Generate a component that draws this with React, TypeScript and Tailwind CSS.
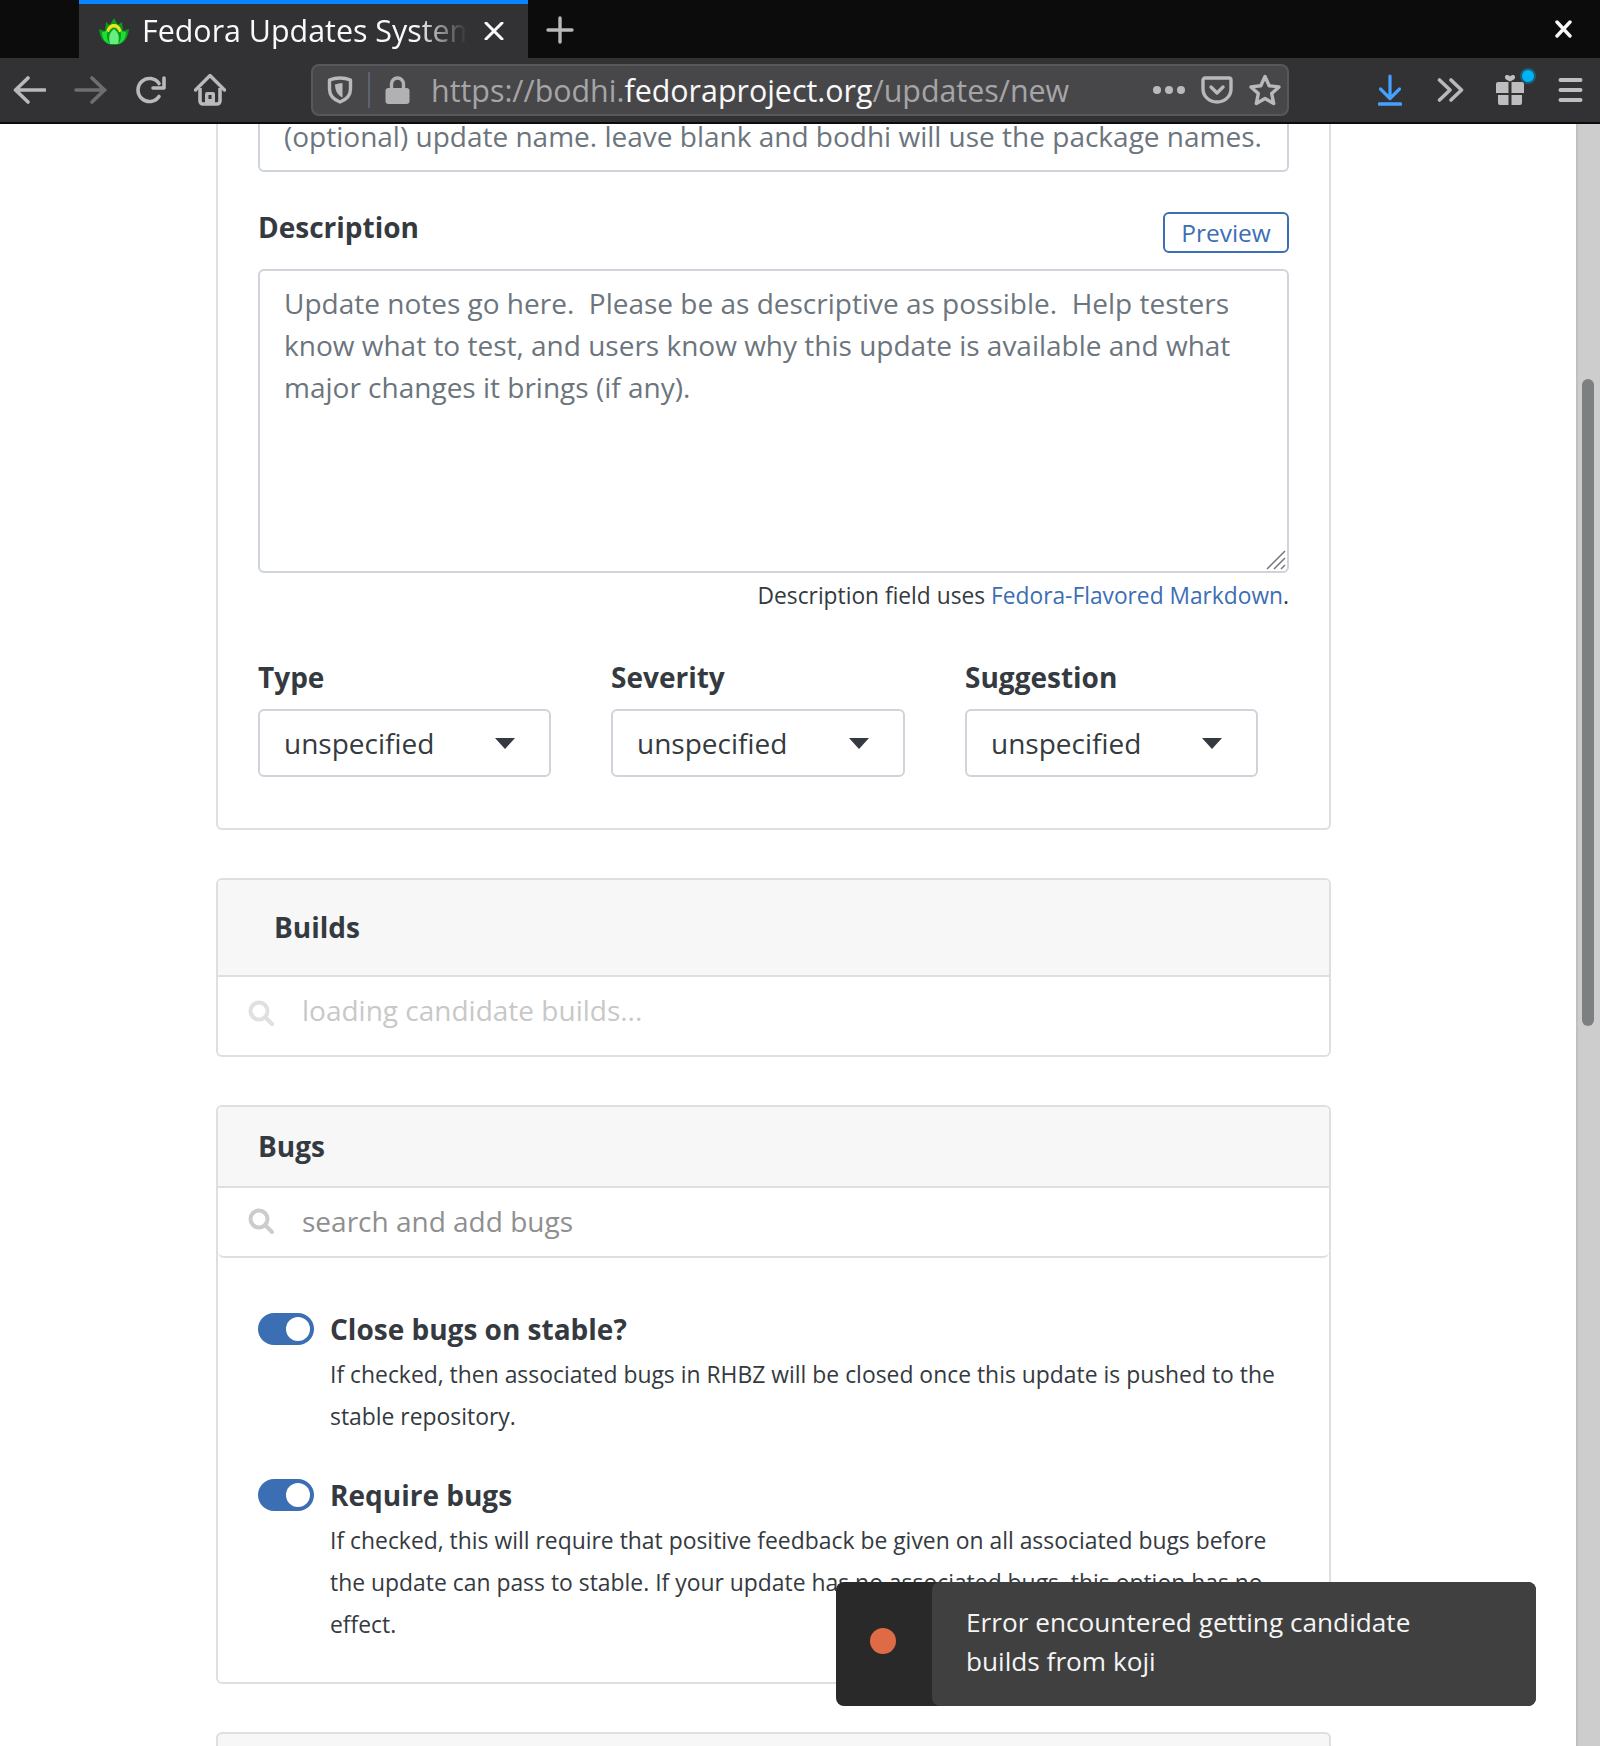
const ICON = "#b9b9bb";

function Favicon() {
  return (
    <svg width="32" height="28" viewBox="0 0 32 28">
      <path d="M16 28C7 28 2 22 1 12l6 2 1-9 4 3 4-7 4 7 4-3 1 9 6-2c-1 10-6 16-15 16z" fill="#0b9a1c" />
      <path d="M8 15c2-7 5-8 8-8s6 1 8 8h-3c-1-3-3-4.500-5-4.500S12 12 11 15z" fill="#efe31f" />
      <path d="M10 14c-2 4-1 10 2 13-5-1-8-6-8-12zM22 14c2 4 1 10-2 13 5-1 8-6 8-12z" fill="#1fdc37" />
      <path d="M16 12c4 3 6 7 4 15h-8c-2-8 0-12 4-15z" fill="#63f080" />
    </svg>
  );
}

function Back() {
  return (
    <svg width="33" height="28" viewBox="0 0 33 28" fill="none" stroke={ICON} strokeWidth="3.600" strokeLinecap="round" strokeLinejoin="round">
      <path d="M3 14h29M15 2 2.500 14 15 26" />
    </svg>
  );
}

function Forward() {
  return (
    <svg width="33" height="28" viewBox="0 0 33 28" fill="none" stroke="#6e6e70" strokeWidth="3.600" strokeLinecap="round" strokeLinejoin="round">
      <path d="M31 14H2M18 2l12.500 12L18 26" />
    </svg>
  );
}

function Reload() {
  return (
    <svg width="30" height="28" viewBox="0 0 30 28" fill="none" stroke={ICON} strokeWidth="3.600" strokeLinecap="round" strokeLinejoin="round">
      <path d="M23 7.500A11.500 11.500 0 1 0 23 20.500" />
      <path d="M28 2v10H17" />
    </svg>
  );
}

function Home() {
  return (
    <svg width="32" height="32" viewBox="0 0 32 32" fill="none">
      <path d="M1.500 16 16 1.500 30.500 16" stroke={ICON} strokeWidth="3.400" strokeLinecap="round" strokeLinejoin="round" />
      <path d="M6 14v13a3 3 0 0 0 3 3h14a3 3 0 0 0 3-3V14" stroke={ICON} strokeWidth="3.600" />
      <path d="M11 30V20a2 2 0 0 1 2-2h6a2 2 0 0 1 2 2v10z" fill={ICON} />
      <rect x="14.500" y="21" width="3" height="4" fill="#323234" />
    </svg>
  );
}

function Shield() {
  return (
    <svg width="26" height="28" viewBox="0 0 26 28" fill="none">
      <path d="M13 2c4 0 7 .6 10.500 2v9c0 6.500-4 10.500-10.500 13C6.500 23.500 2.500 19.500 2.500 13V4C6 2.600 9 2 13 2z" stroke={ICON} strokeWidth="3.400" strokeLinejoin="round" />
      <path d="M15.500 7v14.500C11 19.500 8 15 8 8.500c2.500-1 5-1.500 7.500-1.500z" fill={ICON} />
    </svg>
  );
}

function Lock() {
  return (
    <svg width="25" height="28" viewBox="0 0 25 28" fill="none">
      <path d="M6.500 13V8a6 6 0 0 1 12 0v5" stroke="#b1b1b3" strokeWidth="3.400" />
      <rect x="0.500" y="12" width="24" height="16" rx="3" fill="#b1b1b3" />
    </svg>
  );
}

function Pocket() {
  return (
    <svg width="32" height="28" viewBox="0 0 32 28" fill="none" stroke={ICON} strokeWidth="3.400" strokeLinecap="round" strokeLinejoin="round">
      <path d="M4 2h24a2 2 0 0 1 2 2v9c0 7-6 13-14 13S2 20 2 13V4a2 2 0 0 1 2-2z" />
      <path d="m10 11 6 6 6-6" />
    </svg>
  );
}

function Star() {
  return (
    <svg width="32" height="32" viewBox="0 0 32 32" fill="none" stroke={ICON} strokeWidth="3.400" strokeLinejoin="round">
      <path d="m16 2.500 4.200 9.300 9.800 1.100-7.300 6.700 2 9.900-8.700-5-8.700 5 2-9.900L2 12.900l9.800-1.100z" />
    </svg>
  );
}

function Download() {
  return (
    <svg width="24" height="32" viewBox="0 0 24 32" fill="none" stroke="#45a1ff" strokeWidth="3.200" strokeLinecap="round" strokeLinejoin="round">
      <path d="M12 2v22M2.500 15 12 24.500 21.500 15" />
      <path d="M1.500 30h21" strokeWidth="3.600" />
    </svg>
  );
}

function Chevrons() {
  return (
    <svg width="27" height="24" viewBox="0 0 27 24" fill="none" stroke={ICON} strokeWidth="3.600" strokeLinecap="round" strokeLinejoin="round">
      <path d="m2.500 2 10.500 10L2.500 22M14 2l10.500 10L14 22" />
    </svg>
  );
}

function Gift() {
  return (
    <svg width="30" height="32" viewBox="0 0 30 32" fill="#bebebf">
      <path d="M15 7.500c-4-1.500-5.500-3-5-5s3.500-2 5 0c1.500-2 4.500-2 5 0s-1 3.500-5 5z" />
      <path d="M3 8h10.500v11H1V10a2 2 0 0 1 2-2zM16.500 8H27a2 2 0 0 1 2 2v9H16.500z" />
      <path d="M3 21h10.500v10H5a2 2 0 0 1-2-2zM16.500 21H27v8a2 2 0 0 1-2 2h-8.500z" />
    </svg>
  );
}

function Hamburger() {
  return (
    <svg width="25" height="24" viewBox="0 0 25 24" fill="none" stroke="#bebebf" strokeWidth="4" strokeLinecap="round">
      <path d="M2.500 2h20M2.500 12h20M2.500 22h20" />
    </svg>
  );
}

function SearchIcon({ color }: { color: string }) {
  return (
    <svg width="26" height="26" viewBox="0 0 26 26" fill="none" stroke={color} strokeWidth="4" strokeLinecap="round">
      <circle cx="11" cy="11" r="8.500" />
      <path d="m17.500 17.500 6.500 6.500" />
    </svg>
  );
}

function BrowserChrome() {
  return (
    <div className="shrink-0">
      <div className="flex h-[58px] items-start bg-[#0c0c0d]">
        <div className="ml-[79px] flex h-[58px] w-[449px] items-center border-t-4 border-[#0a84ff] bg-[#323234] pl-[19px]">
          <Favicon />
          <span className="ml-[12px] w-[335px] overflow-hidden whitespace-nowrap text-[30.400px] leading-[38px] text-[#f9f9fa] [mask-image:linear-gradient(to_right,black_82%,transparent_97%)]">
            Fedora Updates System
          </span>
          <svg width="20" height="18" viewBox="0 0 20 18" className="ml-[7px]" fill="none" stroke="#f9f9fa" strokeWidth="3" strokeLinecap="round">
            <path d="m2 1 16 16M18 1 2 17" />
          </svg>
        </div>
        <svg width="28" height="28" viewBox="0 0 28 28" className="ml-[18px] mt-[16px]" fill="none" stroke={ICON} strokeWidth="3.400" strokeLinecap="round">
          <path d="M14 2v24M2 14h24" />
        </svg>
        <svg width="17" height="18" viewBox="0 0 17 18" className="ml-[981px] mt-[20px]" fill="none" stroke="#f9f9fa" strokeWidth="3.400" strokeLinecap="round">
          <path d="m2 2 13 14M15 2 2 16" />
        </svg>
      </div>
      <div className="flex h-[64px] items-center bg-[#323234]">
        <div className="ml-[13px] flex"><Back /></div>
        <div className="ml-[28px] flex"><Forward /></div>
        <div className="ml-[29px] flex"><Reload /></div>
        <div className="ml-[28px] flex"><Home /></div>
        <div className="ml-[85px] flex h-[52px] w-[978px] items-center rounded-[8px] border-2 border-[#58585a] bg-[#474749]">
          <div className="ml-[14px] flex"><Shield /></div>
          <div className="ml-[15px] h-[36px] w-[2px] bg-[#5b6272]" />
          <div className="ml-[15px] flex"><Lock /></div>
          <div className="ml-[21px] w-[722px] whitespace-nowrap pt-[2px] text-[30.400px] leading-[38px] text-[#a5a5a7]">
            https://bodhi.<span className="text-[#f9f9fa]">fedoraproject.org</span>/updates/new
          </div>
          <div className="flex gap-[4px]">
            <span className="h-[8px] w-[8px] rounded-full bg-[#b9b9bb]" />
            <span className="h-[8px] w-[8px] rounded-full bg-[#b9b9bb]" />
            <span className="h-[8px] w-[8px] rounded-full bg-[#b9b9bb]" />
          </div>
          <div className="ml-[16px] flex"><Pocket /></div>
          <div className="ml-[16px] flex"><Star /></div>
        </div>
        <div className="ml-[89px] flex"><Download /></div>
        <div className="ml-[35px] flex"><Chevrons /></div>
        <div className="relative ml-[31px] flex">
          <Gift />
          <span className="absolute right-[-11px] top-[-6px] h-[16px] w-[16px] rounded-full border-2 border-[#1c5d74] bg-[#00b3f4]" />
        </div>
        <div className="ml-[33px] flex"><Hamburger /></div>
      </div>
      <div className="h-[2px] bg-[#0c0c0d]" />
    </div>
  );
}

function SelectBox({ label, width }: { label: string; width: string }) {
  return (
    <div className={width}>
      <div className="text-[28px] font-bold leading-[40px] text-[#343a40]">{label}</div>
      <div className="mt-[12px] flex h-[68px] items-center justify-between rounded-[6px] border-2 border-[#ced4da] pl-[24px] pr-[34px]">
        <span className="text-[28px] leading-[42px] text-[#343a40]">unspecified</span>
        <span className="h-0 w-0 border-x-[10px] border-t-[11px] border-x-transparent border-t-[#343a40]" />
      </div>
    </div>
  );
}

function Toggle() {
  return (
    <span className="flex h-[32px] w-[56px] shrink-0 items-center justify-end rounded-full bg-[#3c6eb4] pr-[4px]">
      <span className="h-[24px] w-[24px] rounded-full bg-white" />
    </span>
  );
}

function ToggleRow({ title, lines }: { title: string; lines: string[] }) {
  return (
    <div className="flex gap-[16px]">
      <div className="pt-[2px]"><Toggle /></div>
      <div>
        <div className="text-[28px] font-bold leading-[36px] text-[#343a40]">{title}</div>
        <div className="mt-[7px] text-[22.900px] leading-[42px] text-[#343a40]">
          {lines.map((line) => (
            <div key={line} className="whitespace-nowrap">{line}</div>
          ))}
        </div>
      </div>
    </div>
  );
}

export default function App() {
  return (
    <div className="flex h-[1746px] w-[1600px] flex-col overflow-hidden bg-white font-['Open_Sans',sans-serif]">
      <BrowserChrome />
      <div className="relative flex min-h-0 flex-1">
        <main className="min-w-0 flex-1 pl-[216px]">
          <div className="h-[706px] w-[1115px] rounded-b-[6px] border-x-2 border-b-2 border-[#dfdfdf] px-[40px]">
            <div className="h-[48px] w-[1031px] rounded-b-[6px] border-x-2 border-b-2 border-[#ced4da] pl-[24px] text-[28px] leading-[24px] whitespace-nowrap text-[#6c757d]">
              (optional) update name. leave blank and bodhi will use the package names.
            </div>
            <div className="mt-[40px] flex w-[1031px] items-start justify-between">
              <span className="text-[28px] font-bold leading-[30px] text-[#343a40]">Description</span>
              <span className="flex h-[41px] w-[126px] items-center justify-center rounded-[6px] border-2 border-[#3c6eb4] pt-[1px] text-[24.500px] text-[#3c6eb4]">Preview</span>
            </div>
            <div className="relative mt-[16px] h-[304px] w-[1031px] rounded-[6px] border-2 border-[#ced4da] pl-[24px] pt-[11px] text-[28px] leading-[42px] text-[#6c757d]">
              <div className="whitespace-nowrap">Update notes go here.&nbsp; Please be as descriptive as possible.&nbsp; Help testers</div>
              <div className="whitespace-nowrap">know what to test, and users know why this update is available and what</div>
              <div className="whitespace-nowrap">major changes it brings (if any).</div>
              <svg width="20" height="20" viewBox="0 0 20 20" className="absolute bottom-[1px] right-[1px]" stroke="#757575" strokeWidth="1.500">
                <path d="M1 19 19 1M8 19 19 8M15 19l4-4" />
              </svg>
            </div>
            <div className="mt-[7px] w-[1031px] text-right text-[22.750px] leading-[32px] text-[#343a40]">
              Description field uses <span className="text-[#3c6eb4]">Fedora-Flavored Markdown</span>.
            </div>
            <div className="mt-[45px] flex gap-[60px]">
              <SelectBox label="Type" width="w-[293px]" />
              <SelectBox label="Severity" width="w-[294px]" />
              <SelectBox label="Suggestion" width="w-[293px]" />
            </div>
          </div>

          <div className="mt-[48px] h-[179px] w-[1115px] overflow-hidden rounded-[6px] border-2 border-[#dfdfdf]">
            <div className="flex h-[97px] items-center border-b-2 border-[#dfdfdf] bg-[#f7f7f7] pb-[2px] pl-[56px] text-[28px] font-bold text-[#343a40]">Builds</div>
            <div className="flex h-[78px] items-center pb-[7px] pl-[30px] text-[28px] text-[#c8c8c8]">
              <SearchIcon color="#e0e0e0" />
              <span className="ml-[28px] pb-[5px]">loading candidate builds...</span>
            </div>
          </div>

          <div className="mt-[48px] h-[579px] w-[1115px] rounded-[6px] border-2 border-[#dfdfdf]">
            <div className="flex h-[81px] items-center rounded-t-[6px] border-b-2 border-[#dfdfdf] bg-[#f7f7f7] pb-[2px] pl-[40px] text-[28px] font-bold text-[#343a40]">Bugs</div>
            <div className="flex h-[70px] items-center rounded-b-[6px] border-b-2 border-[#dfdfdf] pb-[2px] pl-[30px] text-[28px] text-[#8f8f8f]">
              <SearchIcon color="#cccccc" />
              <span className="ml-[28px]">search and add bugs</span>
            </div>
            <div className="flex flex-col gap-[39px] pl-[40px] pt-[53px]">
              <ToggleRow
                title="Close bugs on stable?"
                lines={[
                  "If checked, then associated bugs in RHBZ will be closed once this update is pushed to the",
                  "stable repository.",
                ]}
              />
              <ToggleRow
                title="Require bugs"
                lines={[
                  "If checked, this will require that positive feedback be given on all associated bugs before",
                  "the update can pass to stable. If your update has no associated bugs, this option has no",
                  "effect.",
                ]}
              />
            </div>
          </div>

          <div className="mt-[48px] h-[40px] w-[1115px] rounded-t-[6px] border-2 border-[#dfdfdf] bg-[#f7f7f7]" />
        </main>

        <aside className="w-[24px] shrink-0 border-l-2 border-[#c3c0bb] bg-[#cdcdcd] pl-[4px] pt-[255px]">
          <div className="h-[647px] w-[12px] rounded-full bg-[#7d8080]" />
        </aside>

        <div className="absolute left-[836px] top-[1458px] flex h-[124px] w-[700px] overflow-hidden rounded-[8px] bg-[#292929]">
          <div className="flex w-[96px] shrink-0 items-center justify-center pb-[6px] pr-[2px]">
            <span className="h-[26px] w-[26px] rounded-full bg-[#df6b46]" />
          </div>
          <div className="flex-1 rounded-l-[8px] bg-[#404040] pl-[34px] pt-[21px] text-[26.200px] leading-[39px] text-[#f5f5f5]">
            Error encountered getting candidate<br />builds from koji
          </div>
        </div>
      </div>
    </div>
  );
}
